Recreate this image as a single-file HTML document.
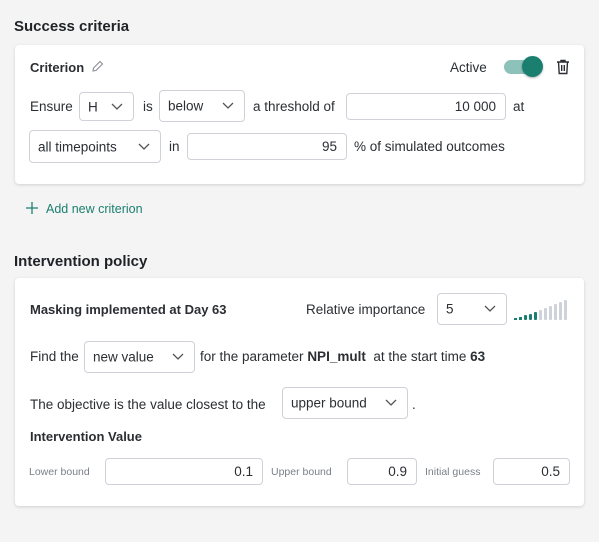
<!DOCTYPE html>
<html><head><meta charset="utf-8"><style>
*{box-sizing:border-box;margin:0;padding:0}
body{width:599px;height:542px;background:#f4f4f4;font-family:"Liberation Sans",sans-serif;color:#2b2e33;position:relative;overflow:hidden;font-size:13.5px}
.a{position:absolute;white-space:nowrap}
.card{position:absolute;background:#fff;border-radius:4px;box-shadow:0 1px 3px rgba(0,0,0,.15)}
.h{font-size:15px;font-weight:bold;color:#1f2328}
.b{font-weight:bold;font-size:13px}
.box{position:absolute;border:1px solid #cfd2d8;border-radius:4px;background:#fff}
.sel span{position:absolute;left:8px;top:50%;transform:translateY(-50%);white-space:nowrap}
.sel svg{position:absolute;right:10px;top:50%;margin-top:-4px}
.inp{text-align:right;padding-right:9px;display:flex;align-items:center;justify-content:flex-end}
.sm{font-size:10.5px;color:#7a7f88}
</style></head><body>
<div class="a h" style="left:14px;top:18px">Success criteria</div>
<div class="card" style="left:15px;top:45px;width:569px;height:139px"></div>
<div class="a b" style="left:30px;top:60px">Criterion</div>
<svg class="a" style="left:91px;top:60px" width="13" height="13" viewBox="0 0 13 13"><path d="M2 11l.5-3L9 1.5l2.5 2.5L5 10.5z" fill="none" stroke="#8a8f96" stroke-width="1.1"/></svg>
<div class="a" style="left:450px;top:60px">Active</div>
<div class="a" style="left:504px;top:60px;width:34px;height:14px;border-radius:7px;background:#8cc2b9"></div>
<div class="a" style="left:522px;top:56px;width:21px;height:21px;border-radius:50%;background:#1b7f70;box-shadow:0 1px 2px rgba(0,0,0,.3)"></div>
<svg class="a" style="left:556px;top:59px" width="14" height="16" viewBox="0 0 14 16"><path d="M1 3h12M5 3V1.5h4V3M2.5 3l.7 11.5h7.6L11.5 3M5.7 6v6M8.3 6v6" fill="none" stroke="#2b2e33" stroke-width="1.4"/></svg>

<div class="a" style="left:30px;top:99px">Ensure</div>
<div class="box sel" style="left:79px;top:92px;width:55px;height:29px"><span>H</span><svg width="12" height="7"><path d="M1 1l5 5 5-5" fill="none" stroke="#555" stroke-width="1.3"/></svg></div>
<div class="a" style="left:143px;top:99px">is</div>
<div class="box sel" style="left:159px;top:90px;width:86px;height:32px"><span>below</span><svg width="12" height="7"><path d="M1 1l5 5 5-5" fill="none" stroke="#555" stroke-width="1.3"/></svg></div>
<div class="a" style="left:253px;top:99px">a threshold of</div>
<div class="box inp" style="left:346px;top:93px;width:160px;height:27px">10 000</div>
<div class="a" style="left:513px;top:99px">at</div>
<div class="box sel" style="left:29px;top:130px;width:132px;height:33px"><span>all timepoints</span><svg width="12" height="7"><path d="M1 1l5 5 5-5" fill="none" stroke="#555" stroke-width="1.3"/></svg></div>
<div class="a" style="left:169px;top:139px">in</div>
<div class="box inp" style="left:187px;top:133px;width:160px;height:27px">95</div>
<div class="a" style="left:354px;top:139px">% of simulated outcomes</div>

<svg class="a" style="left:26px;top:202px" width="12" height="12"><path d="M6 0v12M0 6h12" stroke="#1b7f70" stroke-width="1.3"/></svg>
<div class="a" style="left:46px;top:202px;font-size:12.5px;color:#1b7f70">Add new criterion</div>

<div class="a h" style="left:14px;top:253px">Intervention policy</div>
<div class="card" style="left:15px;top:278px;width:569px;height:228px"></div>
<div class="a b" style="left:30px;top:302px">Masking implemented at Day 63</div>
<div class="a" style="left:306px;top:302px">Relative importance</div>
<div class="box sel" style="left:437px;top:293px;width:70px;height:32px"><span>5</span><svg width="12" height="7"><path d="M1 1l5 5 5-5" fill="none" stroke="#555" stroke-width="1.3"/></svg></div>
<svg class="a" style="left:514px;top:299px" width="57" height="22"><g fill="#1b7f70"><rect x="0" y="19" width="3" height="2"/><rect x="5" y="18" width="3" height="3"/><rect x="10" y="16" width="3" height="5" rx="1"/><rect x="15" y="15" width="3" height="6" rx="1"/><rect x="20" y="13" width="3" height="8" rx="1"/></g><g fill="#ced2d9"><rect x="25" y="11" width="3" height="10" rx="1"/><rect x="30" y="9" width="3" height="12" rx="1"/><rect x="35" y="7" width="3" height="14" rx="1"/><rect x="40" y="5" width="3" height="16" rx="1"/><rect x="45" y="3" width="3" height="18" rx="1"/><rect x="50" y="1" width="3" height="20" rx="1"/></g></svg>

<div class="a" style="left:30px;top:349px">Find the</div>
<div class="box sel" style="left:84px;top:341px;width:111px;height:32px"><span>new value</span><svg width="12" height="7"><path d="M1 1l5 5 5-5" fill="none" stroke="#555" stroke-width="1.3"/></svg></div>
<div class="a" style="left:200px;top:349px">for the parameter <b>NPI_mult</b>&nbsp; at the start time <b>63</b></div>

<div class="a" style="left:30px;top:397px">The objective is the value closest to the</div>
<div class="box sel" style="left:282px;top:387px;width:126px;height:32px"><span>upper bound</span><svg width="12" height="7"><path d="M1 1l5 5 5-5" fill="none" stroke="#555" stroke-width="1.3"/></svg></div>
<div class="a" style="left:412px;top:397px">.</div>
<div class="a b" style="left:30px;top:429px">Intervention Value</div>

<div class="a sm" style="left:29px;top:466px">Lower bound</div>
<div class="box inp" style="left:105px;top:458px;width:158px;height:27px">0.1</div>
<div class="a sm" style="left:271px;top:466px">Upper bound</div>
<div class="box inp" style="left:347px;top:458px;width:70px;height:27px">0.9</div>
<div class="a sm" style="left:425px;top:466px">Initial guess</div>
<div class="box inp" style="left:493px;top:458px;width:77px;height:27px">0.5</div>
</body></html>
